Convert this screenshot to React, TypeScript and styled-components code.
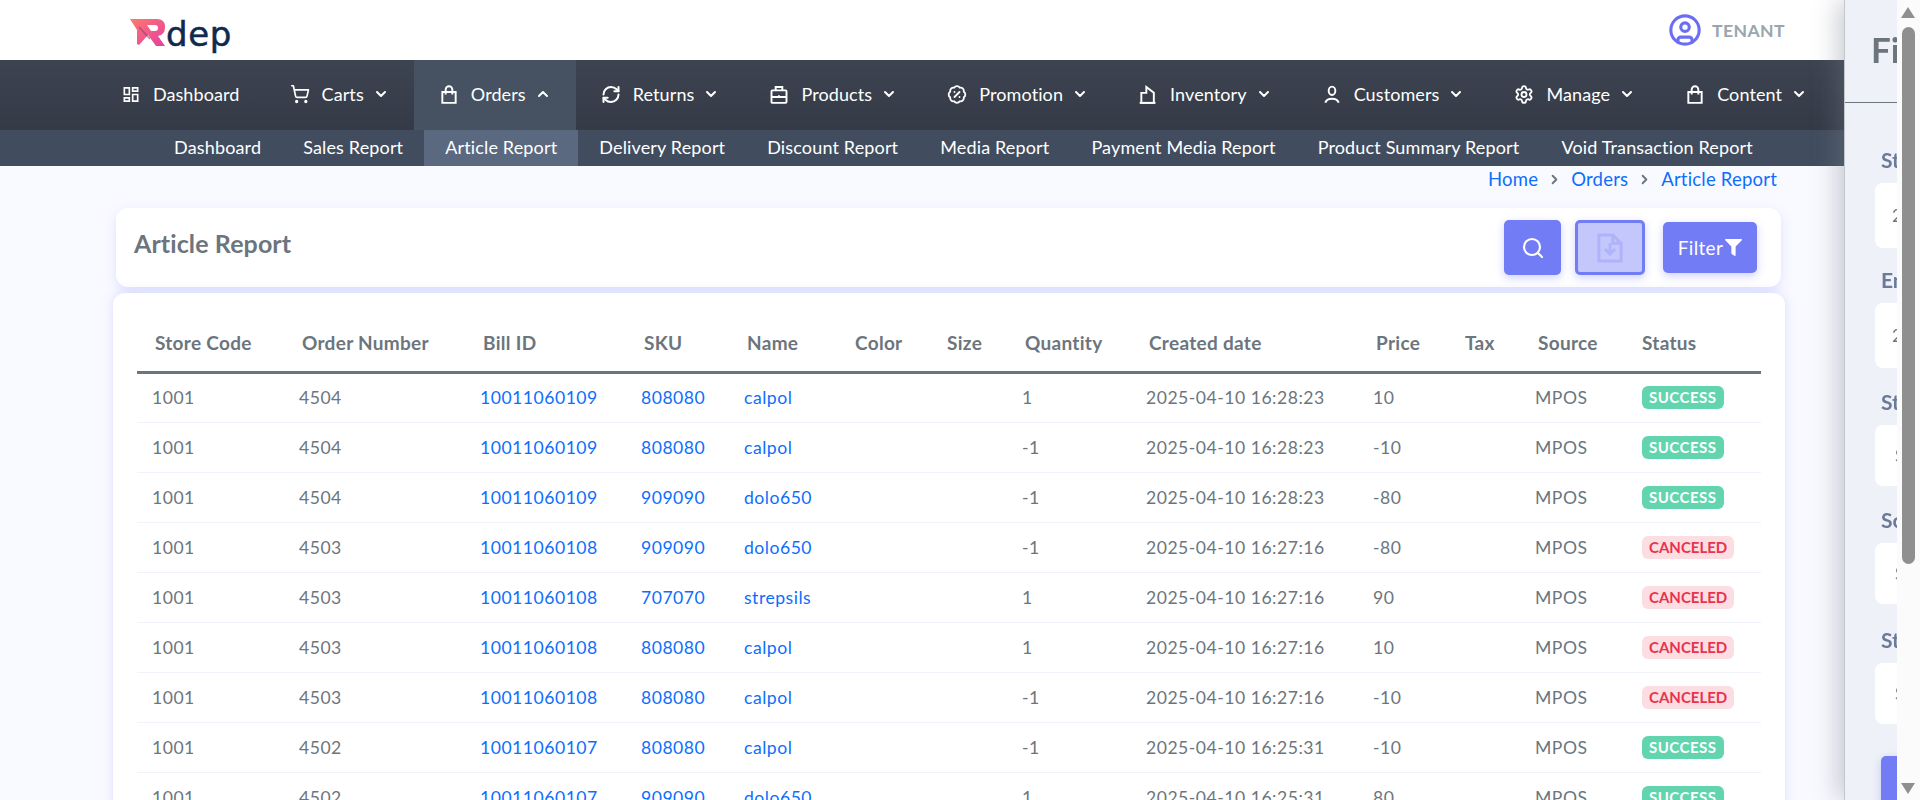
import styled, { createGlobalStyle } from "styled-components";
import { ChevronDown, ChevronRight, ChevronUp, CircleUser, RefreshCw, Search, BadgePercent, Settings, ShoppingCart } from "lucide-react";
import { MdOutlineDashboard } from "react-icons/md";
import { FaFilter } from "react-icons/fa";
import type { ReactNode } from "react";

const GlobalStyle = createGlobalStyle`
  html, body { margin: 0; height: 800px; overflow: hidden; background: #f9faff; }
  body { font-family: Lato, "Noto Sans", sans-serif; font-size: 18px; color: #6c757d; }
  * { box-sizing: border-box; }
`;

const Page = styled.div`
  width: 1920px;
  height: 800px;
  overflow: hidden;
  position: relative;
`;

const TopBar = styled.header`
  height: 60px;
  background: #fff;
  display: flex;
  align-items: center;
  justify-content: space-between;
  padding: 0 135px 0 130px;
`;
const Logo = styled.div`
  display: flex;
  align-items: flex-start;
  height: 46px;
  padding-top: 12px;
`;
const LogoText = styled.span`
  font-family: "DejaVu Sans", sans-serif;
  font-size: 34px;
  line-height: 30px;
  color: #10294d;
  letter-spacing: 0.6px;
  -webkit-text-stroke: 0.5px #10294d;
`;
const UserBox = styled.div`
  display: flex;
  align-items: center;
  gap: 10px;
  color: #98a6ad;
  font-weight: 700;
  font-size: 17.6px;
  letter-spacing: 0.4px;
  svg { color: #6b6ef5; }
`;

const MainNav = styled.nav`
  height: 70px;
  padding-left: 8px;
  background: linear-gradient(180deg, #3d4451 0%, #343a46 100%);
  display: flex;
  justify-content: center;
`;
const NavItem = styled.a<{ $active?: boolean }>`
  display: flex;
  align-items: center;
  height: 70px;
  padding: 0 25px 2px;
  color: #fff;
  background: ${(p) => (p.$active ? "#465162" : "transparent")};
  font-size: 18px;
  letter-spacing: 0.1px;
`;
const NavIcon = styled.span`
  display: flex;
  width: 20px;
  justify-content: center;
  margin-right: 12px;
`;
const NavChevron = styled.span`
  display: flex;
  margin-left: 9px;
`;
const SubNav = styled.nav`
  height: 36px;
  padding-left: 7px;
  background: #414d5e;
  display: flex;
  justify-content: center;
`;
const SubItem = styled.a<{ $active?: boolean }>`
  display: flex;
  align-items: center;
  padding: 0 21px 2px;
  color: #fff;
  background: ${(p) => (p.$active ? "#5a6880" : "transparent")};
  font-size: 18px;
  letter-spacing: 0.15px;
`;

const Main = styled.main`
  padding: 0 135px 0 113px;
`;
const Breadcrumb = styled.div`
  height: 26px;
  padding-right: 8px;
  display: flex;
  align-items: center;
  justify-content: flex-end;
  gap: 9px;
  color: #0d6efd;
  font-size: 18.5px;
  letter-spacing: 0.2px;
  svg { color: #6c757d; }
`;
const TitleCard = styled.section`
  margin: 16px 4px 0 3px;
  height: 79px;
  background: #fff;
  border-radius: 12px;
  box-shadow: 0 4px 12px rgba(114, 124, 245, 0.2);
  display: flex;
  align-items: center;
  justify-content: space-between;
  padding: 0 24px 0 18px;
`;
const Title = styled.h1`
  margin: 0 0 9px;
  font-size: 25px;
  font-weight: 700;
  color: #6c757d;
  letter-spacing: 0.1px;
`;
const Actions = styled.div`
  display: flex;
  align-items: center;
`;
const ActionButton = styled.button`
  display: flex;
  align-items: center;
  justify-content: center;
  border: 0;
  border-radius: 5px;
  background: #727cf5;
  color: #fff;
  font-family: inherit;
  font-size: 19px;
  box-shadow: 0 3px 8px rgba(114, 124, 245, 0.35);
  padding: 0;
`;
const SearchButton = styled(ActionButton)`
  width: 57px;
  height: 55px;
`;
const ExportButton = styled(ActionButton)`
  width: 70px;
  height: 55px;
  margin-left: 14px;
  background: #c3c7fb;
  border: 3px solid #727cf5;
  color: #aeb3fa;
`;
const FilterButton = styled(ActionButton)`
  width: 94px;
  height: 51px;
  margin-left: 18px;
  gap: 2px;
  letter-spacing: 0.3px;
`;

const TableCard = styled.section`
  margin-top: 6px;
  height: 600px;
  background: #fff;
  border-radius: 12px;
  box-shadow: 0 0 12px rgba(114, 124, 245, 0.22);
  padding: 23px 24px 0;
`;
const Table = styled.table`
  width: 1624px;
  table-layout: fixed;
  border-collapse: collapse;
`;
const HeadCell = styled.th`
  height: 56px;
  padding: 0 0 2px 18px;
  text-align: left;
  font-size: 19px;
  font-weight: 700;
  letter-spacing: 0.3px;
  color: #6c757d;
  border-bottom: 3px solid #6c757d;
  white-space: nowrap;
`;
const Cell = styled.td`
  height: 50px;
  padding: 0 0 0 15px;
  font-size: 17.6px;
  letter-spacing: 0.5px;
  color: #6c757d;
  border-bottom: 1px solid #f1f3fa;
  white-space: nowrap;
`;
const LinkText = styled.a`
  color: #0d6efd;
`;
const Badge = styled.span<{ $status: string }>`
  display: inline-block;
  margin-left: 3px;
  height: 23px;
  line-height: 23px;
  padding: 0 7px;
  border-radius: 6px;
  font-size: 15px;
  font-weight: 700;
  letter-spacing: ${(p) => (p.$status === "SUCCESS" ? "0.5px" : "0")};
  background: ${(p) => (p.$status === "SUCCESS" ? "#62d5ae" : "#fcdde2")};
  color: ${(p) => (p.$status === "SUCCESS" ? "#fff" : "#e8334e")};
`;

const Drawer = styled.aside`
  position: fixed;
  top: 0;
  right: 0;
  bottom: 0;
  width: 76px;
  overflow: hidden;
  background: #eef1f7;
  border-left: 1px solid #c4c6cc;
  box-shadow: -6px 0 24px rgba(120, 125, 140, 0.4);
`;
const DrawerInner = styled.div`
  width: 400px;
`;
const DrawerHead = styled.div`
  height: 103px;
  padding: 26px 0 0 26px;
  border-bottom: 1px solid #6c757d;
  font-size: 35px;
  line-height: 46px;
  font-weight: 700;
  color: #6c757d;
`;
const DrawerBody = styled.div`
  padding: 43px 0 0 30px;
`;
const Field = styled.div<{ $gap: number }>`
  margin-bottom: ${(p) => p.$gap}px;
`;
const FieldLabel = styled.div`
  height: 28px;
  line-height: 28px;
  margin: 0 0 9px 6px;
  font-size: 21px;
  font-weight: 700;
  color: #6b7a99;
`;
const FieldInput = styled.div<{ $tall?: boolean }>`
  width: 340px;
  height: ${(p) => (p.$tall ? 65 : 61)}px;
  display: flex;
  align-items: center;
  padding-left: ${(p) => (p.$tall ? 17 : 20)}px;
  background: #fff;
  border-radius: 8px;
  font-size: 17.6px;
  color: #6c757d;
`;
const ApplyButton = styled.div`
  margin: 32px 0 0 6px;
  width: 200px;
  height: 60px;
  border-radius: 5px;
  background: #727cf5;
  box-shadow: 0 3px 8px rgba(114, 124, 245, 0.35);
`;

const ScrollTrack = styled.div`
  position: absolute;
  top: 0;
  right: 0;
  bottom: 0;
  width: 23px;
  background: #fbfbfb;
`;
const ScrollThumb = styled.div`
  position: absolute;
  top: 27px;
  left: 5px;
  width: 13px;
  height: 537px;
  border-radius: 7px;
  background: #8f8f8f;
`;
const ScrollArrow = styled.div<{ $down?: boolean }>`
  position: absolute;
  left: 4px;
  ${(p) => (p.$down ? "bottom: 6px;" : "top: 7px;")}
  width: 0;
  height: 0;
  border-left: 7.5px solid transparent;
  border-right: 7.5px solid transparent;
  ${(p) => (p.$down ? "border-top: 11px solid #8f8f8f;" : "border-bottom: 11px solid #8f8f8f;")}
`;

function Stroke({ children, size = 23 }: { children: ReactNode; size?: number }) {
  return (
    <svg width={size} height={size} viewBox="0 0 24 24" fill="none" stroke="currentColor" strokeWidth="2.3">
      {children}
    </svg>
  );
}

const BagIcon = () => (
  <Stroke>
    <path d="M4 9h16v13H4z" />
    <path d="M8 12V6a4 4 0 0 1 8 0v6" />
  </Stroke>
);
const CaseIcon = () => (
  <Stroke>
    <rect x="3" y="7" width="18" height="15" rx="1" />
    <path d="M8 7V3h8v4M3 15h18M12 13v3" />
  </Stroke>
);
const InventoryIcon = () => (
  <Stroke>
    <path d="M4 22V10h6V3l9 7v12z" />
    <path d="M2 22h19" />
  </Stroke>
);
const PersonIcon = () => (
  <Stroke>
    <ellipse cx="12" cy="7.5" rx="4" ry="5" />
    <path d="M4 22c1-4 4-5 8-5s7 1 8 5" />
  </Stroke>
);
const FileDownIcon = () => (
  <svg width="26" height="30" viewBox="0 0 28 32" fill="none" stroke="currentColor" strokeWidth="3.2">
    <path d="M2 2h15l9 9v19H2z" />
    <path d="M17 2v9h9" />
    <path d="M14 11v11M8.5 17l5.5 5.5 5.5-5.5" />
  </svg>
);

const navItems: { label: string; icon: ReactNode; open?: boolean; noChevron?: boolean }[] = [
  { label: "Dashboard", icon: <MdOutlineDashboard size={25} />, noChevron: true },
  { label: "Carts", icon: <ShoppingCart size={24} strokeWidth={2} /> },
  { label: "Orders", icon: <BagIcon />, open: true },
  { label: "Returns", icon: <RefreshCw size={21} strokeWidth={2.4} /> },
  { label: "Products", icon: <CaseIcon /> },
  { label: "Promotion", icon: <BadgePercent size={23} strokeWidth={2.2} /> },
  { label: "Inventory", icon: <InventoryIcon /> },
  { label: "Customers", icon: <PersonIcon /> },
  { label: "Manage", icon: <Settings size={23} strokeWidth={2.2} /> },
  { label: "Content", icon: <BagIcon /> },
];

const subItems = [
  "Dashboard",
  "Sales Report",
  "Article Report",
  "Delivery Report",
  "Discount Report",
  "Media Report",
  "Payment Media Report",
  "Product Summary Report",
  "Void Transaction Report",
];

const columns = [
  { title: "Store Code", width: 147 },
  { title: "Order Number", width: 181 },
  { title: "Bill ID", width: 161 },
  { title: "SKU", width: 103 },
  { title: "Name", width: 108 },
  { title: "Color", width: 92 },
  { title: "Size", width: 78 },
  { title: "Quantity", width: 124 },
  { title: "Created date", width: 227 },
  { title: "Price", width: 89 },
  { title: "Tax", width: 73 },
  { title: "Source", width: 104 },
  { title: "Status", width: 137 },
];

const rows = [
  ["4504", "10011060109", "808080", "calpol", "1", "2025-04-10 16:28:23", "10", "SUCCESS"],
  ["4504", "10011060109", "808080", "calpol", "-1", "2025-04-10 16:28:23", "-10", "SUCCESS"],
  ["4504", "10011060109", "909090", "dolo650", "-1", "2025-04-10 16:28:23", "-80", "SUCCESS"],
  ["4503", "10011060108", "909090", "dolo650", "-1", "2025-04-10 16:27:16", "-80", "CANCELED"],
  ["4503", "10011060108", "707070", "strepsils", "1", "2025-04-10 16:27:16", "90", "CANCELED"],
  ["4503", "10011060108", "808080", "calpol", "1", "2025-04-10 16:27:16", "10", "CANCELED"],
  ["4503", "10011060108", "808080", "calpol", "-1", "2025-04-10 16:27:16", "-10", "CANCELED"],
  ["4502", "10011060107", "808080", "calpol", "-1", "2025-04-10 16:25:31", "-10", "SUCCESS"],
  ["4502", "10011060107", "909090", "dolo650", "1", "2025-04-10 16:25:31", "80", "SUCCESS"],
];

const filterFields = [
  { label: "Start Date", value: "2025-04-10", tall: true, gap: 18 },
  { label: "End Date", value: "2025-04-10", tall: true, gap: 20 },
  { label: "Store", value: "Select", tall: false, gap: 20 },
  { label: "Source", value: "Select", tall: false, gap: 22 },
  { label: "Status", value: "Select", tall: false, gap: 20 },
];

export default function App() {
  return (
    <Page>
      <GlobalStyle />
      <TopBar>
        <Logo>
          <svg width="36" height="27" viewBox="0 0 36 27">
            <defs>
              <linearGradient id="logoPink" x1="0" y1="0" x2="1" y2="1">
                <stop offset="0" stopColor="#fb7a70" />
                <stop offset="1" stopColor="#e83e9f" />
              </linearGradient>
            </defs>
            <path
              fill="url(#logoPink)"
              d="M0 0h27q8 0 8 8t-7 9l7 10h-9l-8-11-9 10-2-1V11z"
            />
            <path fill="#fff" d="M17 6h8q3 0 3 3t-3 3h-4z" />
            <path stroke="#8d3b63" strokeWidth="1.5" opacity="0.6" d="M9 8l11 12" />
          </svg>
          <LogoText>dep</LogoText>
        </Logo>
        <UserBox>
          <CircleUser size={34} strokeWidth={2.2} />
          TENANT
        </UserBox>
      </TopBar>
      <MainNav>
        {navItems.map((item) => (
          <NavItem key={item.label} $active={item.open}>
            <NavIcon>{item.icon}</NavIcon>
            {item.label}
            {!item.noChevron && (
              <NavChevron>
                {item.open ? <ChevronUp size={16} strokeWidth={3} /> : <ChevronDown size={16} strokeWidth={3} />}
              </NavChevron>
            )}
          </NavItem>
        ))}
      </MainNav>
      <SubNav>
        {subItems.map((label) => (
          <SubItem key={label} $active={label === "Article Report"}>
            {label}
          </SubItem>
        ))}
      </SubNav>
      <Main>
        <Breadcrumb>
          Home
          <ChevronRight size={15} strokeWidth={3} />
          Orders
          <ChevronRight size={15} strokeWidth={3} />
          Article Report
        </Breadcrumb>
        <TitleCard>
          <Title>Article Report</Title>
          <Actions>
            <SearchButton>
              <Search size={24} strokeWidth={2.2} />
            </SearchButton>
            <ExportButton>
              <FileDownIcon />
            </ExportButton>
            <FilterButton>
              Filter
              <FaFilter size={17} />
            </FilterButton>
          </Actions>
        </TitleCard>
        <TableCard>
          <Table>
            <colgroup>
              {columns.map((c) => (
                <col key={c.title} width={c.width} />
              ))}
            </colgroup>
            <thead>
              <tr>
                {columns.map((c) => (
                  <HeadCell key={c.title}>{c.title}</HeadCell>
                ))}
              </tr>
            </thead>
            <tbody>
              {rows.map((r, i) => (
                <tr key={i}>
                  <Cell>1001</Cell>
                  <Cell>{r[0]}</Cell>
                  <Cell>
                    <LinkText>{r[1]}</LinkText>
                  </Cell>
                  <Cell>
                    <LinkText>{r[2]}</LinkText>
                  </Cell>
                  <Cell>
                    <LinkText>{r[3]}</LinkText>
                  </Cell>
                  <Cell />
                  <Cell />
                  <Cell>{r[4]}</Cell>
                  <Cell>{r[5]}</Cell>
                  <Cell>{r[6]}</Cell>
                  <Cell />
                  <Cell>MPOS</Cell>
                  <Cell>
                    <Badge $status={r[7]}>{r[7]}</Badge>
                  </Cell>
                </tr>
              ))}
            </tbody>
          </Table>
        </TableCard>
      </Main>
      <Drawer>
        <DrawerInner>
          <DrawerHead>Filter</DrawerHead>
          <DrawerBody>
            {filterFields.map((f) => (
              <Field key={f.label} $gap={f.gap}>
                <FieldLabel>{f.label}</FieldLabel>
                <FieldInput $tall={f.tall}>{f.value}</FieldInput>
              </Field>
            ))}
            <ApplyButton />
          </DrawerBody>
        </DrawerInner>
        <ScrollTrack>
          <ScrollArrow />
          <ScrollThumb />
          <ScrollArrow $down />
        </ScrollTrack>
      </Drawer>
    </Page>
  );
}
